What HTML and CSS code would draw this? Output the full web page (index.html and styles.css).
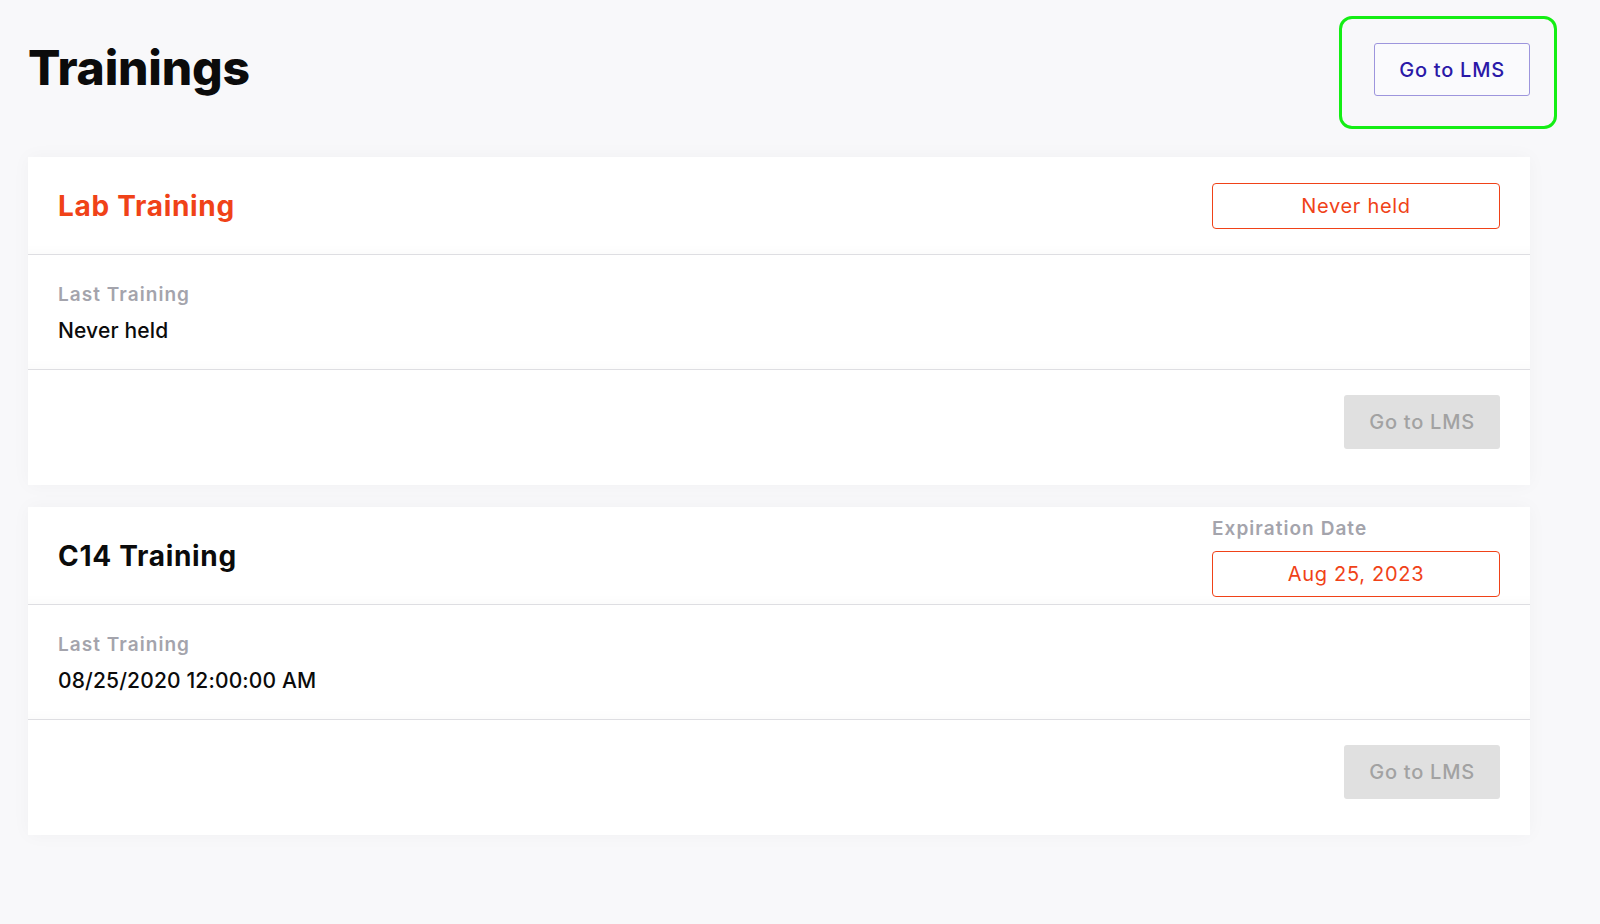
FILE: index.html
```html
<!DOCTYPE html>
<html lang="en">
<head>
<meta charset="utf-8">
<title>Trainings</title>
<link rel="stylesheet" href="styles.css">
</head>
<body>
<div class="page">
  <div class="topbar">
    <h1 class="page-title">Trainings</h1>
    <div class="highlight">
      <button class="btn btn-outline">Go to LMS</button>
    </div>
  </div>

  <div class="cards">
    <section class="card">
      <div class="card-header">
        <h2 class="card-title card-title-alert">Lab Training</h2>
        <div class="status">
          <div class="badge">Never held</div>
        </div>
      </div>
      <div class="card-body">
        <div class="field-label">Last Training</div>
        <div class="field-value">Never held</div>
      </div>
      <div class="card-footer">
        <button class="btn btn-disabled">Go to LMS</button>
      </div>
    </section>

    <section class="card">
      <div class="card-header">
        <h2 class="card-title">C14 Training</h2>
        <div class="status">
          <div class="field-label status-label">Expiration Date</div>
          <div class="badge">Aug 25, 2023</div>
        </div>
      </div>
      <div class="card-body">
        <div class="field-label">Last Training</div>
        <div class="field-value">08/25/2020 12:00:00 AM</div>
      </div>
      <div class="card-footer">
        <button class="btn btn-disabled">Go to LMS</button>
      </div>
    </section>
  </div>
</div>
</body>
</html>
```

FILE: styles.css
```css
* {
  box-sizing: border-box;
}

html, body {
  margin: 0;
  padding: 0;
}

body {
  background: #f8f8fa;
  font-family: Inter, "Noto Sans", "Liberation Sans", sans-serif;
  color: #111;
  width: 1600px;
  height: 924px;
  overflow: hidden;
}

.page {
  padding-left: 28px;
}

.topbar {
  display: flex;
  justify-content: space-between;
  align-items: flex-start;
  padding-top: 16px;
  padding-right: 43px;
}

.page-title {
  margin: 23px 0 0 0;
  font-size: 48px;
  line-height: 58px;
  font-weight: 800;
  letter-spacing: -0.2px;
  color: #0b0b0b;
}

.highlight {
  border: 3px solid #14ee14;
  border-radius: 13px;
  padding: 24px 24px 30px 32px;
}

.btn {
  display: flex;
  align-items: center;
  justify-content: center;
  width: 156px;
  height: 54px;
  font-family: inherit;
  font-size: 20px;
  font-weight: 500;
  letter-spacing: 0.75px;
  border-radius: 3px;
  padding: 0;
  cursor: pointer;
}

.btn-outline {
  height: 53px;
  background: #fafafd;
  border: 1px solid #9d95dd;
  color: #2a18a8;
}

.btn-disabled {
  background: #e0e0e0;
  border: none;
  color: #a2a2a2;
}

.cards {
  width: 1502px;
  margin-top: 28px;
  display: flex;
  flex-direction: column;
  gap: 22px;
}

.card {
  background: #fff;
  box-shadow: 0 0 18px rgba(0, 0, 0, 0.035);
}

.card-header {
  height: 98px;
  border-bottom: 1px solid #dedee2;
  padding: 0 30px;
  display: flex;
  justify-content: space-between;
  align-items: center;
  box-shadow: inset 0 -14px 14px -14px rgba(0, 0, 0, 0.03);
}

.card-title {
  margin: 0;
  font-size: 28px;
  line-height: 34px;
  font-weight: 700;
  letter-spacing: 0.7px;
  color: #0b0b0b;
}

.card-title-alert {
  color: #f04218;
}

.status {
  width: 288px;
  display: flex;
  flex-direction: column;
}

.badge {
  height: 46px;
  border: 1px solid #f04218;
  border-radius: 4px;
  color: #f04218;
  font-size: 20px;
  letter-spacing: 0.7px;
  display: flex;
  align-items: center;
  justify-content: center;
}

.field-label {
  font-size: 19px;
  line-height: 28px;
  font-weight: 600;
  letter-spacing: 1.05px;
  color: #a4a4ac;
}

.status-label {
  margin-bottom: 8px;
}

.card-body {
  height: 115px;
  border-bottom: 1px solid #dedee2;
  padding: 26px 30px 0 30px;
  box-shadow: inset 0 -14px 14px -14px rgba(0, 0, 0, 0.03);
}

.field-value {
  margin-top: 7px;
  font-size: 21px;
  line-height: 30px;
  font-weight: 500;
  letter-spacing: 0.15px;
  color: #0b0b0b;
}

.card-footer {
  height: 115px;
  padding: 25px 30px 0 30px;
  display: flex;
  justify-content: flex-end;
  align-items: flex-start;
}
```
